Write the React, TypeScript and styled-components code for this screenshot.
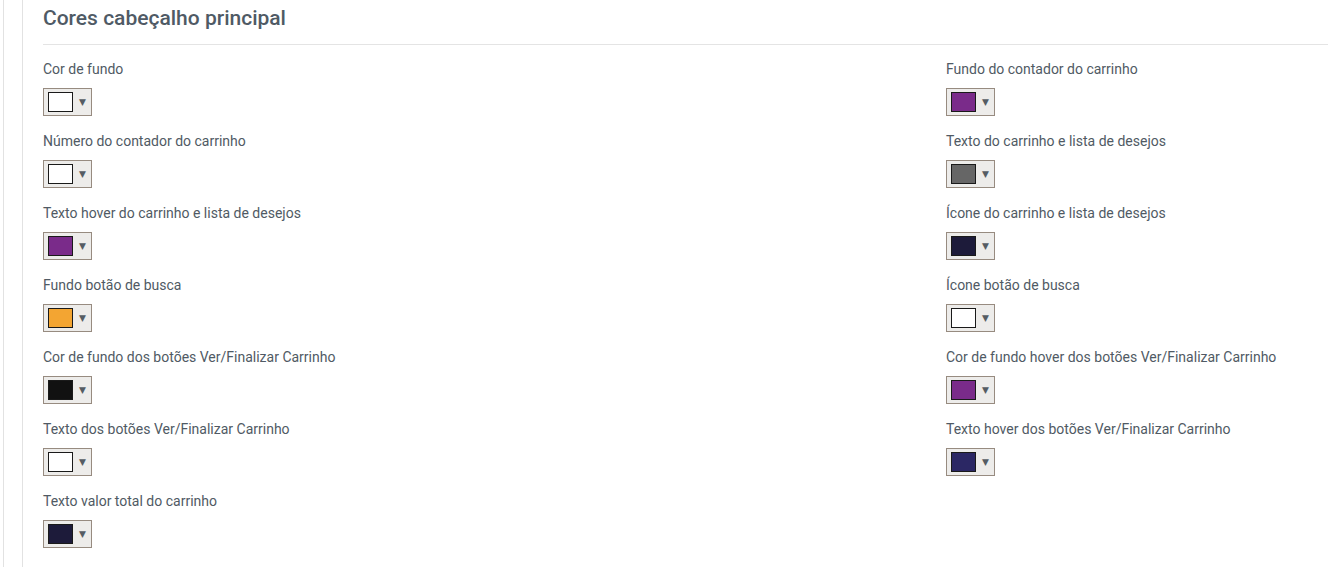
import styled, { createGlobalStyle } from "styled-components";

const GlobalStyle = createGlobalStyle`
  html, body {
    margin: 0;
    padding: 0;
    background: #fff;
    overflow: hidden;
  }
  body {
    font-family: Roboto, "Liberation Sans", Arial, sans-serif;
  }
`;

interface ColorField {
  label: string;
  color: string;
}

const fields: ColorField[] = [
  { label: "Cor de fundo", color: "#ffffff" },
  { label: "Fundo do contador do carrinho", color: "#7a2b8a" },
  { label: "Número do contador do carrinho", color: "#ffffff" },
  { label: "Texto do carrinho e lista de desejos", color: "#666666" },
  { label: "Texto hover do carrinho e lista de desejos", color: "#7a2b8a" },
  { label: "Ícone do carrinho e lista de desejos", color: "#1d1b3a" },
  { label: "Fundo botão de busca", color: "#f3a532" },
  { label: "Ícone botão de busca", color: "#ffffff" },
  { label: "Cor de fundo dos botões Ver/Finalizar Carrinho", color: "#111111" },
  { label: "Cor de fundo hover dos botões Ver/Finalizar Carrinho", color: "#7a2b8a" },
  { label: "Texto dos botões Ver/Finalizar Carrinho", color: "#ffffff" },
  { label: "Texto hover dos botões Ver/Finalizar Carrinho", color: "#2b2764" },
  { label: "Texto valor total do carrinho", color: "#1d1b3a" },
];

const App = () => {
  return (
    <>
      <GlobalStyle />
      <Frame>
        <Section>
          <Title>Cores cabeçalho principal</Title>
          <FieldGrid>
            {fields.map((field, index) => (
              <Field key={index}>
                <FieldLabel>{field.label}</FieldLabel>
                <Picker type="button">
                  <Swatch $color={field.color} />
                  <Caret>▼</Caret>
                </Picker>
              </Field>
            ))}
          </FieldGrid>
        </Section>
      </Frame>
    </>
  );
};

export default App;

const Frame = styled.div`
  margin-left: 3px;
  border-left: 1px solid #e2e2e2;
  padding-left: 18px;
  height: 567px;
  box-sizing: border-box;
`;

const Section = styled.div`
  border-left: 1px solid #e2e2e2;
  padding-left: 20px;
  height: 100%;
  box-sizing: border-box;
`;

const Title = styled.h2`
  margin: 0;
  padding: 6px 0 14px;
  font-size: 21px;
  line-height: 24px;
  font-weight: 500;
  color: #4f5a65;
  border-bottom: 1px solid #e4e4e4;
`;

const FieldGrid = styled.div`
  display: grid;
  grid-template-columns: 903px 1fr;
  padding-top: 15px;
`;

const Field = styled.div`
  display: flex;
  flex-direction: column;
  align-items: flex-start;
  height: 72px;
`;

const FieldLabel = styled.label`
  font-size: 14px;
  line-height: 18px;
  color: #505a64;
  margin-bottom: 10px;
`;

const Picker = styled.button`
  display: flex;
  align-items: center;
  box-sizing: border-box;
  width: 49px;
  height: 28px;
  padding: 0 0 0 4px;
  margin: 0;
  border: 1px solid #978b80;
  background: #edecea;
  cursor: pointer;
`;

const Swatch = styled.span<{ $color: string }>`
  display: block;
  box-sizing: border-box;
  width: 25px;
  height: 20px;
  border: 1px solid #1a1a1a;
  background: ${(p) => p.$color};
`;

const Caret = styled.span`
  margin-left: 6px;
  font-size: 9px;
  line-height: 1;
  color: #555c63;
  font-family: "DejaVu Sans", sans-serif;
`;
